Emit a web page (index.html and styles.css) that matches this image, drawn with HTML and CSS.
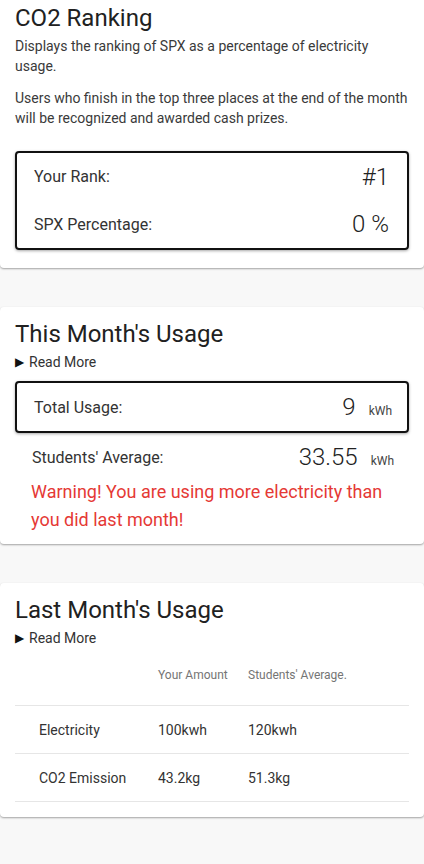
FILE: index.html
```html
<!DOCTYPE html>
<html>
<head>
<meta charset="utf-8">
<link rel="stylesheet" href="styles.css">
</head>
<body>
<div class="page">
  <section class="card card-first">
    <h1 class="title">CO2 Ranking</h1>
    <p class="desc">Displays the ranking of SPX as a percentage of electricity usage.</p>
    <p class="desc desc-2">Users who finish in the top three places at the end of the month will be recognized and awarded cash prizes.</p>
    <div class="box rank-box">
      <div class="row"><span class="label">Your Rank:</span><span class="big">#1</span></div>
      <div class="row"><span class="label">SPX Percentage:</span><span class="big">0 %</span></div>
    </div>
  </section>

  <section class="card">
    <h1 class="title">This Month's Usage</h1>
    <div class="more"><span class="tri">&#9654;</span>Read More</div>
    <div class="box usage-box">
      <div class="row"><span class="label">Total Usage:</span><span class="val"><span class="big">9</span><span class="unit">kWh</span></span></div>
    </div>
    <div class="row avg-row"><span class="label">Students' Average:</span><span class="val"><span class="big">33.55</span><span class="unit">kWh</span></span></div>
    <p class="warn">Warning! You are using more electricity than you did last month!</p>
  </section>

  <section class="card card-last">
    <h1 class="title">Last Month's Usage</h1>
    <div class="more"><span class="tri">&#9654;</span>Read More</div>
    <table class="tbl">
      <thead>
        <tr><th></th><th>Your Amount</th><th>Students' Average.</th></tr>
      </thead>
      <tbody>
        <tr><td>Electricity</td><td>100kwh</td><td>120kwh</td></tr>
        <tr><td>CO2 Emission</td><td>43.2kg</td><td>51.3kg</td></tr>
      </tbody>
    </table>
  </section>
</div>
</body>
</html>
```
FILE: styles.css
```css
html, body {
  margin: 0;
  padding: 0;
  background: #f8f8f8;
  font-family: Roboto, "Liberation Sans", sans-serif;
  color: #212121;
}
.page {
  display: flex;
  flex-direction: column;
  gap: 39px;
  padding-bottom: 40px;
}
.card {
  background: #fff;
  border-radius: 4px;
  box-shadow: 0 1px 2px rgba(0,0,0,0.35);
  padding: 13px 15px 10px 15px;
  width: 394px;
}
.card-first {
  padding-top: 4px;
  padding-bottom: 12px;
  border-top-left-radius: 0;
  border-top-right-radius: 0;
}
.card-last {
  padding-bottom: 15px;
}
.title {
  margin: 0;
  font-size: 24px;
  font-weight: 400;
  line-height: 28px;
  color: #212121;
}
.desc {
  margin: 4px 0 0 0;
  font-size: 14px;
  line-height: 20px;
  color: #3a3a3a;
  padding-right: 40px;
}
.desc-2 {
  margin-top: 12px;
  padding-right: 0;
}
.box {
  border: 2px solid #111;
  border-radius: 4px;
  box-shadow: 0 1px 3px rgba(0,0,0,0.35);
}
.rank-box {
  margin-top: 23px;
  margin-bottom: 6px;
  padding: 0 18px 0 17px;
  display: flex;
  flex-direction: column;
}
.rank-box .row {
  height: 48px;
}
.rank-box .row:first-child {
  height: 47px;
}
.row {
  display: flex;
  justify-content: space-between;
  align-items: center;
}
.label {
  font-size: 16px;
  color: #333;
}
.big {
  font-size: 24px;
  font-weight: 300;
  color: #222;
}
.val {
  display: flex;
  align-items: baseline;
  gap: 13px;
}
.unit {
  font-size: 12px;
  color: #444;
}
.more {
  margin-top: 5px;
  font-size: 14px;
  line-height: 18px;
  color: #333;
  display: flex;
  align-items: center;
}
.tri {
  font-size: 12px;
  margin-right: 5px;
  color: #111;
}
.usage-box {
  margin-top: 10px;
  padding: 0 15px 0 17px;
  height: 48px;
  display: flex;
  flex-direction: column;
  justify-content: center;
}
.avg-row {
  padding: 0 15px 0 17px;
  height: 48px;
}
.warn {
  margin: -3px 0 0 0;
  padding: 0 16px 0 16px;
  font-size: 18px;
  line-height: 28px;
  color: #e53935;
}
.tbl {
  margin-top: 4px;
  width: 100%;
  border-collapse: collapse;
  font-size: 14px;
}
.tbl th {
  font-weight: 400;
  font-size: 12px;
  color: #757575;
  text-align: left;
  height: 48px;
  padding: 0 0 6px 0;
  border-bottom: 1px solid #e6e6e6;
}
.tbl td {
  height: 47px;
  border-bottom: 1px solid #e6e6e6;
  padding: 0;
  color: #333;
}
.tbl th:first-child, .tbl td:first-child {
  padding-left: 24px;
  width: 119px;
}
.tbl th:nth-child(2), .tbl td:nth-child(2) {
  width: 90px;
}
```
